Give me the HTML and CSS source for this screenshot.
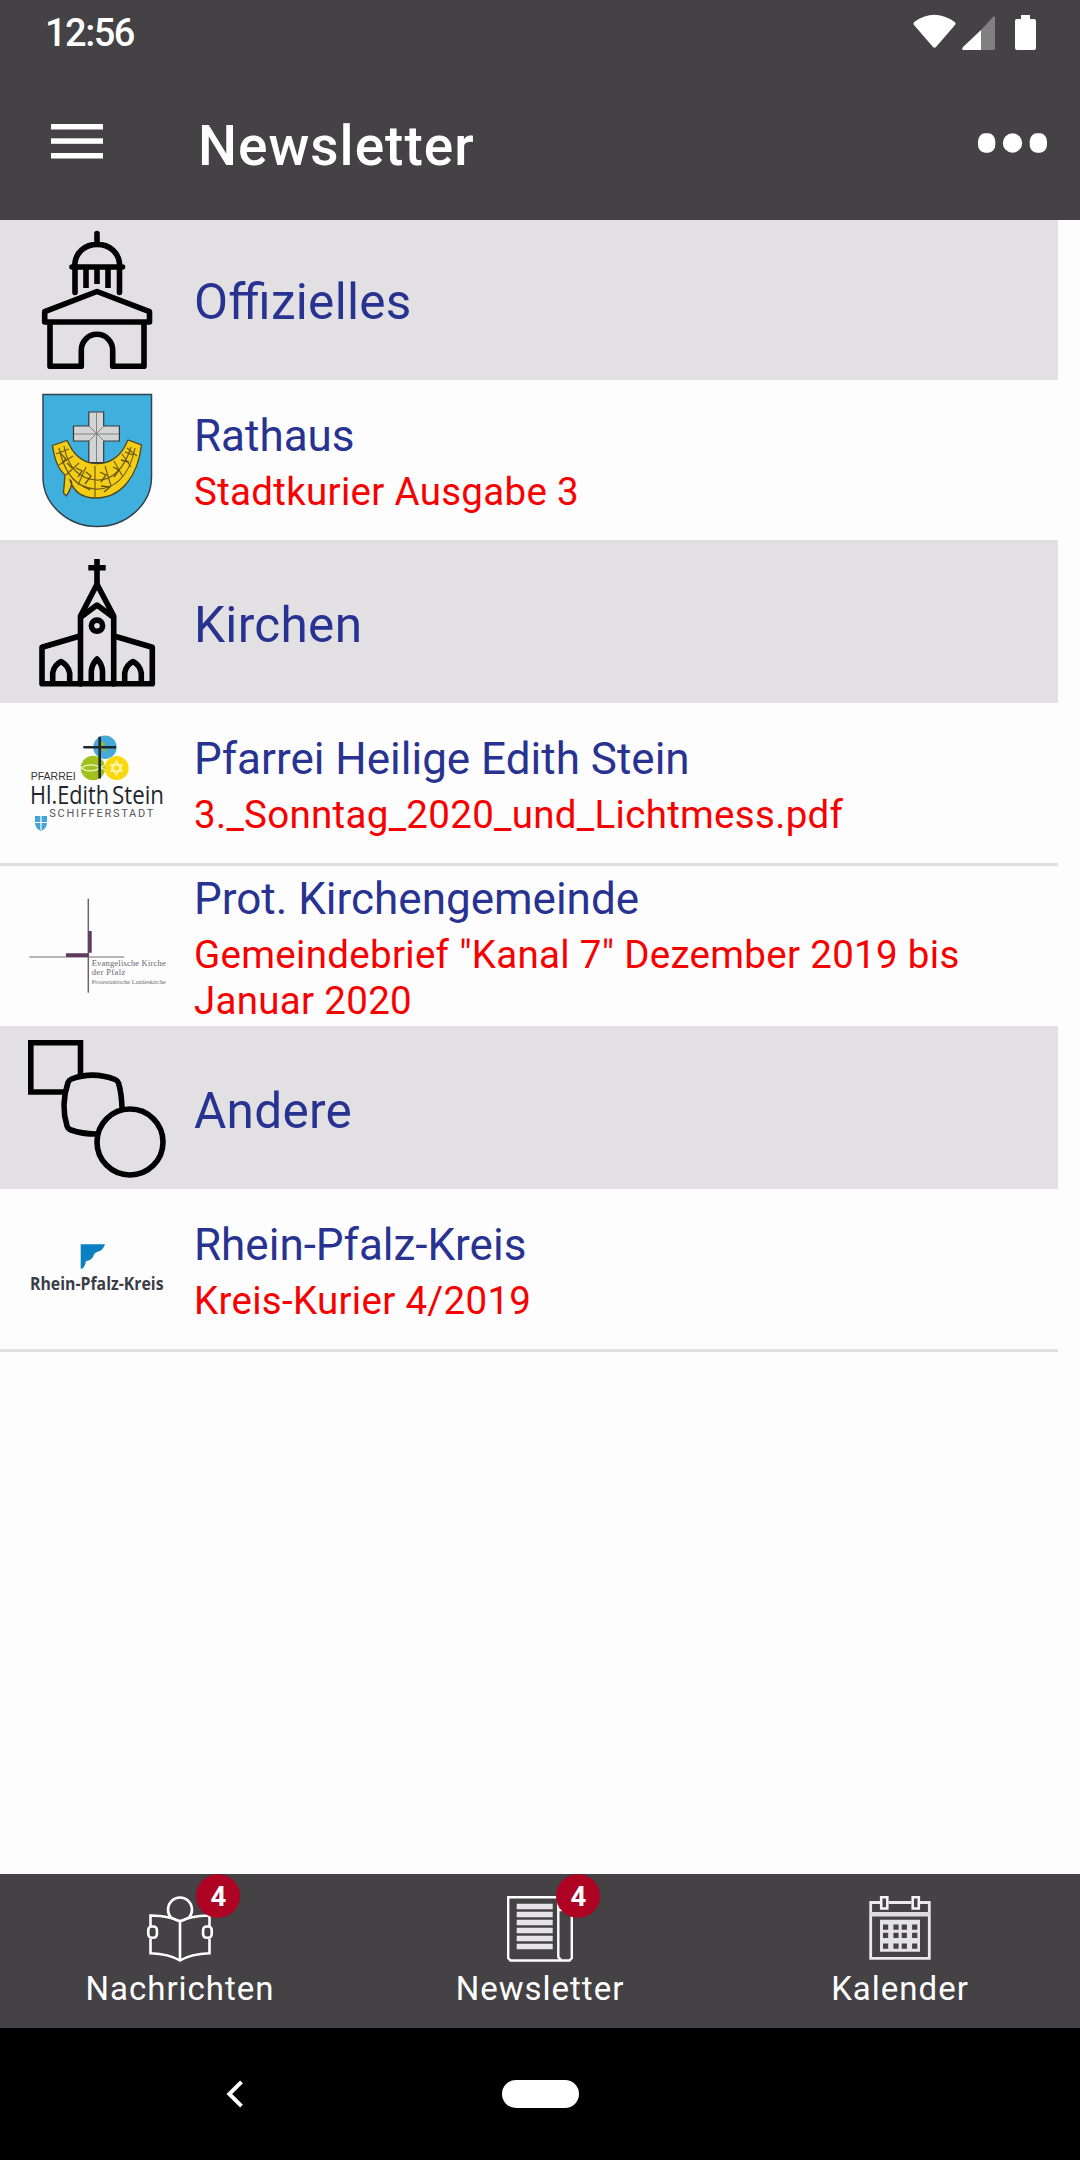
FILE: index.html
```html
<!DOCTYPE html>
<html lang="de">
<head>
<meta charset="UTF-8" />
<meta name="viewport" content="width=device-width, initial-scale=1" />
<title>Newsletter</title>
<link rel="stylesheet" href="styles.css">
</head>
<body>

<header>
  <div class="statusbar">
    <span class="uhrzeit">12:56</span>
    <svg class="status-icons" width="124" height="38" viewBox="0 0 124 38">
      <path d="M1 11Q-.5 9 2 7.500Q21 -6 41 7.500Q43.500 9 42 11L23 33Q21.500 34.500 20 33Z" fill="#fff"/>
      <path d="M68 16V36H50.500Q48 35.500 50 33Z" fill="#fff"/>
      <path d="M68 16L79.500 3.500Q82 1 82 4V34.500Q82 36 80.500 36H68Z" fill="#807f81"/>
      <path d="M108 1H117V5H121Q123 5 123 7V34Q123 36 121 36H104Q102 36 102 34V7Q102 5 104 5H108Z" fill="#fff"/>
    </svg>
  </div>
  <div class="appbar">
    <svg class="menu" width="52" height="36" viewBox="0 0 52 36" fill="#fff">
      <rect x="0" y="1" width="52" height="5.500"/>
      <rect x="0" y="15.300" width="52" height="5.500"/>
      <rect x="0" y="30" width="52" height="5.500"/>
    </svg>
    <h1>Newsletter</h1>
    <svg class="mehr" width="70" height="20" viewBox="0 0 70 20" fill="#fff">
      <rect x="0" y="0.300" width="17.300" height="19.400" rx="7" ry="8"/>
      <ellipse cx="34.500" cy="10" rx="9.700" ry="9.700"/>
      <rect x="51.700" y="0.300" width="17.300" height="19.400" rx="7" ry="8"/>
    </svg>
  </div>
</header>

<main>
  <div class="gruppe">
    <svg class="bild strich" viewBox="0 0 138 138">
      <path d="M69 2.500V13M46.700 35.700C46.700 5.900 91.700 5.900 91.700 35.700M44 36H94.500M47 36V61.500M91.500 36V61.500"/>
      <path d="M58 36V57M80 36V57M69 36V53" stroke-linecap="butt"/>
      <path d="M69 60.500L121.500 80.700V91H16.700V80.700ZM22 91V135.300H53.300V119A15.700 15.700 0 0 1 84.700 119V135.300H116V91"/>
    </svg>
    <h2>Offizielles</h2>
  </div>

  <div class="eintrag">
    <svg class="bild" viewBox="0 0 138 138">
      <path d="M15 3.500H123.500V86C123.500 113 99 135.500 69.200 135.500S15 113 15 86Z" fill="#3fb0de" stroke="#32424f" stroke-width="1.500"/>
      <path d="M24.500 54.500L39 49.500L42 55C53 78 85 79 97 55L100 49L113.500 54C110 84 94 107 67.700 107C53 107 45 99 42 89C46 91 42 99 38.500 105L35.500 102L37 84C29 77 26 66 24.500 54.500Z" fill="#f4ce16" stroke="#4c4521" stroke-width="1.300"/>
      <path d="M31 57C37 85 49 97 67 98S101 87 107 57M36 55C40 78 53 88 68 89S96 79 103 56M28 63L41 58M31 74L45 65M38 84L51 72M50 94L58 76M67 75V106M83 95L77 75M95 86L86 70M103 76L94 63M109 65L99 57" fill="none" stroke="#6e5d17" stroke-width="1.200"/>
      <path d="M48 77L54 80L50 86M58 81L63 85L57 93M72 81L78 84L73 91M85 76L91 79L86 86M93 69L101 71M97 61L105 64M32 62L38 68L34 72M39 72L44 77M73 95L82 96L76 101M55 95L62 99" fill="none" stroke="#5f5015" stroke-width="1.300"/>
      <path d="M60.800 21H75.700V35H91.400V50H75.700V71.500H60.800V50H45.500V35H60.800Z" fill="#d4d4d4" stroke="#35383d" stroke-width="1.200"/>
      <path d="M68.500 22V71M46 43H91M61 35L76 50M76 35L61 50" stroke="#77797c" stroke-width="0.900"/>
    </svg>
    <div class="text">
      <h3>Rathaus</h3>
      <p>Stadtkurier Ausgabe 3</p>
    </div>
  </div>

  <div class="gruppe">
    <svg class="bild strich" viewBox="0 0 138 138">
      <path d="M69 5V30M60.300 13.700H77.700" stroke-linecap="butt"/>
      <path d="M52.500 130V62L69 30.300L85.700 62V130M53 63L69 51L85 63"/>
      <circle cx="69" cy="71.700" r="5.600"/>
      <path d="M52 82L14 93.300V129.700H124.300V93.300L86 82"/>
      <path d="M24.700 129V119Q26 111 33 107.500Q40 111 41.700 119V129M63.300 129V117Q64 110 69 105Q74 110 74.500 117V129M96.700 129V119Q98 111 105 107.500Q112 111 113.300 119V129"/>
    </svg>
    <h2>Kirchen</h2>
  </div>

  <div class="eintrag">
    <svg class="bild" viewBox="0 0 138 138">
      <circle cx="77" cy="33.300" r="11.700" fill="#47a9d8"/>
      <circle cx="65" cy="54" r="12.200" fill="#a2c01c"/>
      <circle cx="88.700" cy="54" r="12" fill="#fbd808"/>
      <path d="M73 28L77 29L76 34L79 38L75 37L71 33Z" fill="#90b93c"/>
      <path d="M53 54Q63 47 77 56M53 54Q63 61 77 51" fill="none" stroke="#eef3cf" stroke-width="1.200"/>
      <path d="M88.500 47L94 57H83ZM88.500 61L83 51H94Z" fill="none" stroke="#fff6bd" stroke-width="1.400"/>
      <path d="M71.700 22.700V64.500M55.300 33.300H88" stroke="#20262b" stroke-width="2.600"/>
      <text class="logo-pfarrei" x="2.700" y="66" textLength="45" lengthAdjust="spacingAndGlyphs">PFARREI</text>
      <text class="logo-edith" x="2" y="89.700" textLength="79" lengthAdjust="spacingAndGlyphs">Hl.Edith</text>
      <text class="logo-edith" x="84" y="89.700" textLength="52" lengthAdjust="spacingAndGlyphs">Stein</text>
      <text class="logo-stadt" x="21.300" y="102.500" textLength="104">SCHIFFERSTADT</text>
      <path d="M7 102H19V109Q19 114 13 117Q7 114 7 109Z" fill="#45a3d5"/>
      <path d="M13 102V116M7 108.500H19" stroke="#fff" stroke-width="1.200"/>
    </svg>
    <div class="text">
      <h3>Pfarrei Heilige Edith Stein</h3>
      <p>3._Sonntag_2020_und_Lichtmess.pdf</p>
    </div>
  </div>

  <div class="eintrag">
    <svg class="bild" viewBox="0 0 138 138">
      <path d="M1.300 80H96.300" stroke="#a09ba1" stroke-width="1.300"/>
      <path d="M60.300 21.700V115.700" stroke="#6b6370" stroke-width="1.500"/>
      <path d="M60.300 54H63.700V75.800H60.300ZM38 76.200H60.500V80H38Z" fill="#5e3a5c"/>
      <text class="logo-kirche" x="63.700" y="89.300" textLength="74">Evangelische Kirche</text>
      <text class="logo-kirche" x="63.700" y="98.300" textLength="33.500">der Pfalz</text>
      <text class="logo-kirche logo-klein" x="63.700" y="106.700" textLength="74">Protestantische Landeskirche</text>
    </svg>
    <div class="text">
      <h3>Prot. Kirchengemeinde</h3>
      <p>Gemeindebrief "Kanal 7" Dezember 2019 bis Januar 2020</p>
    </div>
  </div>

  <div class="gruppe">
    <svg class="bild strich" viewBox="0 0 138 138">
      <path d="M52.500 34V2.800H2.800V52H36" stroke-linecap="butt" stroke-linejoin="miter"/>
      <path d="M94 67.500Q93.500 53 90.500 43Q89.500 40.500 87 39.500Q65 31 43.500 39Q41 40 40 42.500Q32.500 65 39 86Q40 89 43 90Q54 94 68 94"/>
      <circle cx="102" cy="102" r="33"/>
    </svg>
    <h2>Andere</h2>
  </div>

  <div class="eintrag">
    <svg class="bild" viewBox="0 0 138 138">
      <path d="M52.700 44.300H77Q75 51 69 52Q66 53 65 57Q62 61 58 61Q57 68 52.700 69Z" fill="#0a7fc1"/>
      <text class="logo-kreis" x="2" y="90.300" textLength="133.500" lengthAdjust="spacingAndGlyphs">Rhein-Pfalz-Kreis</text>
    </svg>
    <div class="text">
      <h3>Rhein-Pfalz-Kreis</h3>
      <p>Kreis-Kurier 4/2019</p>
    </div>
  </div>
</main>

<nav class="tabs">
  <div class="tab">
    <div class="tab-icon">
      <svg width="66" height="66" viewBox="0 0 66 66" fill="none" stroke="#fff" stroke-width="2.600">
        <path d="M24 21.500A12 12 0 1 1 42 21.500"/>
        <path d="M3.500 30V19.500Q24 20 33 25.500Q42 20 62.500 19.500V30M3.500 43V57.300Q22 58 33 64.500Q44 58 62.500 57.300V43M33 25V64"/>
        <path d="M24 21.500Q28 24 33 25Q38 24 42 21.500"/>
        <rect x="1.300" y="30.500" width="8.600" height="11.300" rx="3.500"/>
        <rect x="56.100" y="30.500" width="8.600" height="11.300" rx="3.500"/>
      </svg>
      <span class="badge">4</span>
    </div>
    <span class="label">Nachrichten</span>
  </div>
  <div class="tab">
    <div class="tab-icon">
      <svg width="66" height="66" viewBox="0 0 66 66">
        <path d="M1.200 1.200H51.300V61L54.500 64.500H3.500L1.200 62ZM51.300 14H64.800V62L62.500 64.500H54" fill="none" stroke="#fff" stroke-width="2.400"/>
        <path d="M9.700 10.500H45.700M9.700 18.500H45.700M9.700 26.500H45.700M9.700 34.500H45.700M9.700 42.500H45.700M9.700 50.500H45.700" stroke="#e6e5e7" stroke-width="5.400"/>
      </svg>
      <span class="badge">4</span>
    </div>
    <span class="label">Newsletter</span>
  </div>
  <div class="tab">
    <div class="tab-icon">
      <svg width="66" height="66" viewBox="0 0 66 66">
        <path d="M13 6.500H3.700V62.300H62.300V6.500H53M21.500 6.500H44.500" fill="none" stroke="#e9e8ea" stroke-width="2.800"/>
        <path d="M3 18.300H63" stroke="#dcdbdd" stroke-width="4.600"/>
        <path d="M14.200 1.200H20.300V12.500H14.200ZM45.700 1.200H51.800V12.500H45.700Z" fill="none" stroke="#f2f1f3" stroke-width="2.600"/>
        <path d="M13 23.700H53V55.700H13Z" fill="#e3e2e4"/>
        <path d="M18.600 28.500V53M29 28.500V53M37.300 28.500V53M47.700 28.500V53" stroke="#444245" stroke-width="5.200" stroke-dasharray="5.200 3.100 5.200 5.500"/>
      </svg>
    </div>
    <span class="label">Kalender</span>
  </div>
</nav>

<footer>
  <svg class="zurueck" width="18" height="28" viewBox="0 0 18 28">
    <path d="M15.500 1.800L3.300 14L15.500 26.200" fill="none" stroke="#fff" stroke-width="4"/>
  </svg>
  <div class="home"></div>
</footer>

</body>
</html>
```

FILE: styles.css
```css
* {
  box-sizing: border-box;
}
body {
  margin: 0;
  width: 1080px;
  height: 2160px;
  display: flex;
  flex-direction: column;
  overflow: hidden;
  font-family: Roboto, sans-serif;
  background-color: #fdfdfd;
}
h1, h2, h3, p {
  margin: 0;
  font-weight: 400;
}
header {
  height: 220px;
  color: #fff;
  background-color: #444245;
}
.statusbar {
  height: 66px;
  padding: 14px 43px 0 45px;
  display: flex;
  justify-content: space-between;
}
.uhrzeit {
  font-size: 38px;
  line-height: 38px;
  font-weight: 500;
  letter-spacing: -1.500px;
}
.appbar {
  height: 154px;
  padding: 0 32px 0 51px;
  display: flex;
  align-items: center;
}
.menu {
  margin-bottom: 4px;
}
h1 {
  flex: 1;
  margin: 6px 0 0 95px;
  font-size: 55px;
  font-weight: 500;
  letter-spacing: 1px;
}
main {
  flex: 1;
  width: 1058px;
}
.gruppe, .eintrag {
  display: flex;
  align-items: center;
  padding: 0 28px;
}
.gruppe {
  height: 160px;
  background-color: #e2e0e3;
}
.eintrag {
  height: 163px;
  border-bottom: 3px solid #e0dfe1;
}
.bild {
  flex: none;
  width: 138px;
  height: 138px;
  margin-right: 28px;
  overflow: visible;
}
.strich {
  fill: none;
  stroke: #000;
  stroke-width: 5.600;
  stroke-linecap: round;
  stroke-linejoin: round;
}
h2, h3 {
  color: #283391;
}
h2 {
  padding-top: 3px;
  font-size: 49.500px;
  letter-spacing: 0.300px;
  font-feature-settings: "liga" 1;
}
h3 {
  font-size: 44px;
  line-height: 66px;
}
.text {
  margin-top: -2px;
}
.text p {
  font-size: 38.500px;
  line-height: 46px;
  letter-spacing: 0.300px;
  color: #f80000;
}

/* Schrift in den Logos */
.logo-pfarrei {
  font: 10.500px "Liberation Sans", sans-serif;
  fill: #35363a;
}
.logo-edith {
  font: 25px "Open Sans", sans-serif;
  fill: #24262b;
}
.logo-stadt {
  font: 11px Roboto, sans-serif;
  fill: #55575c;
}
.logo-kirche {
  font: 8.500px "Liberation Serif", serif;
  fill: #6b6370;
}
.logo-klein {
  font-size: 6px;
}
.logo-kreis {
  font: 700 18px "Open Sans", sans-serif;
  fill: #3a3c48;
}

.tabs {
  height: 154px;
  display: flex;
  color: #fff;
  background-color: #444245;
}
.tab {
  flex: 1;
  padding-top: 22px;
  display: flex;
  flex-direction: column;
  align-items: center;
}
.tab-icon {
  position: relative;
  height: 66px;
}
.badge {
  position: absolute;
  top: -22px;
  left: 49px;
  width: 44px;
  height: 44px;
  padding-left: 1px;
  border-radius: 50%;
  background-color: #ae0322;
  font-size: 27.500px;
  line-height: 46px;
  font-weight: 700;
  text-align: center;
}
.label {
  margin-top: 7px;
  font-size: 33px;
  line-height: 40px;
  letter-spacing: 1px;
}
footer {
  height: 132px;
  padding: 0 226px;
  display: flex;
  align-items: center;
  background-color: #000;
}
.home {
  width: 77px;
  height: 28px;
  margin-left: 258px;
  border-radius: 14px;
  background-color: #fff;
}
```
